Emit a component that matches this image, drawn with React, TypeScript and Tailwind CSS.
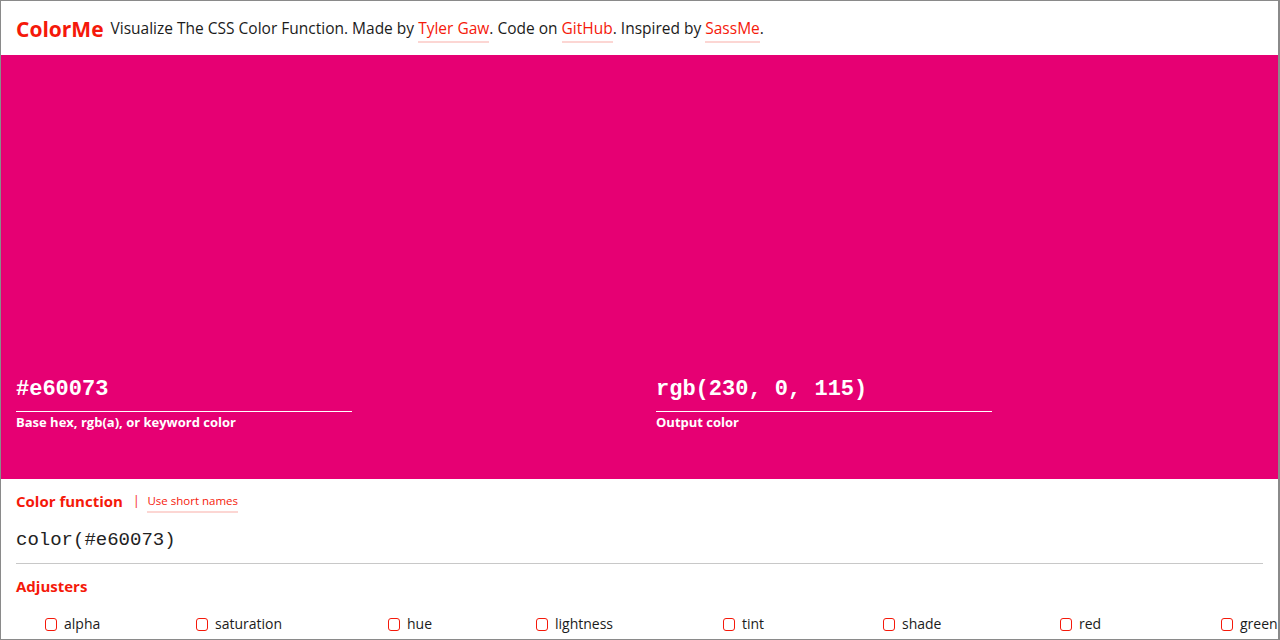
const RED = "text-[#f5190a]";

const adjusters = [
  { name: "alpha", w: "w-[151px]" },
  { name: "saturation", w: "w-[192px]" },
  { name: "hue", w: "w-[148px]" },
  { name: "lightness", w: "w-[187px]" },
  { name: "tint", w: "w-[160px]" },
  { name: "shade", w: "w-[177px]" },
  { name: "red", w: "w-[161px]" },
  { name: "green", w: "w-[60px]" },
];

function ColorField({ value, label }: { value: string; label: string }) {
  return (
    <div className="w-[336px]">
      <div className="font-['Liberation_Mono',monospace] font-bold text-[22px] leading-[28px] text-white pb-[7px] border-b border-white">
        {value}
      </div>
      <div className="mt-[1px] text-[13px] font-bold leading-[18px] text-white">{label}</div>
    </div>
  );
}

function Link({ children }: { children: React.ReactNode }) {
  return (
    <a href="#" className={`${RED} border-b-2 border-[#fcd6d3] pb-[2px]`}>
      {children}
    </a>
  );
}

export default function App() {
  return (
    <div className="h-[640px] overflow-hidden border border-r-2 border-[#8a8a8a] bg-white font-['Open_Sans',sans-serif] text-[#1b1b1b]">
      {/* Header */}
      <header className="h-[54px] flex items-center px-[15px] pt-[2px] gap-[7px]">
        <h1 className={`${RED} font-bold text-[21px] leading-none`}>ColorMe</h1>
        <p className="text-[15.5px] leading-none">
          Visualize The CSS Color Function. Made by <Link>Tyler Gaw</Link>. Code on <Link>GitHub</Link>. Inspired by{" "}
          <Link>SassMe</Link>.
        </p>
      </header>

      {/* Swatch */}
      <section className="h-[424px] bg-[#e60073] flex items-end px-[15px] pb-[48px]">
        <div className="flex gap-[304px]">
          <ColorField value="#e60073" label="Base hex, rgb(a), or keyword color" />
          <ColorField value="rgb(230, 0, 115)" label="Output color" />
        </div>
      </section>

      {/* Function */}
      <section className="px-[15px]">
        <div className="flex items-center mt-[13px] h-[18px]">
          <h2 className={`${RED} font-bold text-[15px] leading-none`}>Color function</h2>
          <span className={`${RED} text-[12px] ml-[10px] mr-[8px]`}>|</span>
          <a href="#" className={`${RED} text-[11.5px] leading-none border-b-2 border-[#fcd6d3] pb-[5px] mt-[6px]`}>
            Use short names
          </a>
        </div>
        <div className="mt-[18px] font-['Liberation_Mono',monospace] text-[19px] leading-[24px] text-[#222]">
          color(#e60073)
        </div>
        <hr className="mt-[11px] border-t border-[#c8c8c8]" />
        <h2 className={`${RED} font-bold text-[15px] leading-none mt-[15px]`}>Adjusters</h2>
        <div className="flex mt-[23px] pl-[29px]">
          {adjusters.map((a) => (
            <label key={a.name} className={`${a.w} shrink-0 flex items-center gap-[7px] text-[14px] leading-none`}>
              <span className="w-[12px] h-[13px] rounded-[3px] border border-[#f5190a] bg-white" />
              {a.name}
            </label>
          ))}
        </div>
      </section>
    </div>
  );
}
